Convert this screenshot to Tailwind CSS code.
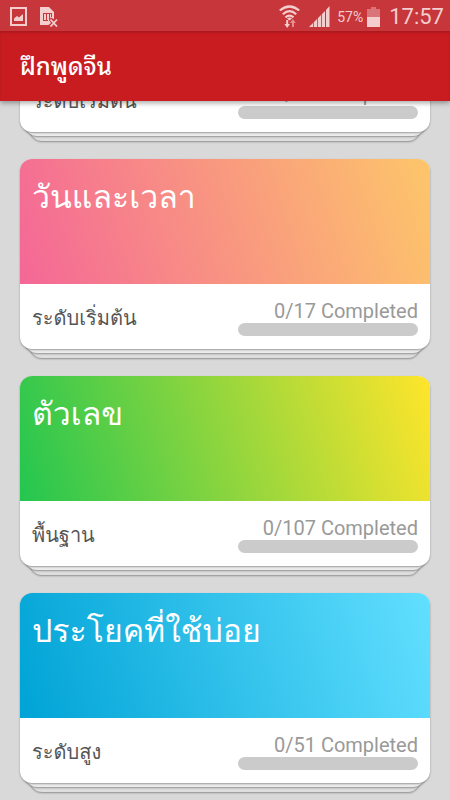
<!DOCTYPE html>
<html lang="th">
<head>
<meta charset="utf-8">
<meta name="viewport" content="width=device-width, initial-scale=1">
<title>ฝึกพูดจีน</title>
<script src="https://cdn.jsdelivr.net/npm/@tailwindcss/browser@4"></script>
</head>
<body class="flex h-screen flex-col overflow-hidden bg-[#d9d9d9] font-[Roboto,Loma,'Noto_Sans_Thai_Looped','Noto_Sans',sans-serif]">

<header class="relative z-10 shrink-0 bg-[#c81c21] shadow-[0_2px_5px_rgba(0,0,0,0.35)]">
  <!-- Status bar -->
  <div class="flex h-[31px] items-center justify-between bg-[#c6363b] pt-[2px] pr-[6px] pl-[10px] text-[#f4cdce]">
    <div class="flex items-center gap-[13px]">
      <svg class="h-[19px] w-[17px]" viewBox="0 0 17 19" fill="currentColor" aria-hidden="true">
        <path fill-rule="evenodd" d="M0 0H17V19H0ZM2 2V17H15V2Z"/>
        <path d="M4 14V11.500L7 9L9 10.500L13 7V14Z"/>
      </svg>
      <svg class="h-[20px] w-[18px]" viewBox="0 0 18 20" fill="currentColor" aria-hidden="true">
        <path d="M0 0H9L14 5V11.500L13.500 12L11 10.500L8.800 12.800L11 16L8.500 18H0Z"/>
        <path d="M3 6.500H12M3.500 6V14M6.500 6V14M9.500 6V12M11.500 6V10M3 13.500H8" fill="none" stroke="#c6363b" stroke-width="1"/>
        <path d="M10.500 12.500L17 19.500M17 12.500L10.500 19.500" fill="none" stroke="currentColor" stroke-width="1.800"/>
      </svg>
    </div>
    <div class="flex items-center">
      <svg class="mr-[9px] h-[24px] w-[21px]" viewBox="0 0 21 24" fill="none" stroke="currentColor" aria-hidden="true">
        <path d="M.8 5.500Q10.500-2.500 20.200 5.500M3.800 9.200Q10.500 3.200 17.200 9.200M6.500 12.400Q10.500 8.800 14.500 12.400" stroke-width="2.200"/>
        <path d="M8 13.500Q10.500 11.500 13 13.500L10.500 15.500Z" fill="currentColor" stroke="none"/>
        <path d="M7.200 15H9.200V19H11L8.200 23L5.400 19H7.200Z" fill="currentColor" stroke="none"/>
        <path d="M13 22V18H11L13.900 14L16.800 18H14.900V22Z" fill="#e58f92" stroke="none"/>
      </svg>
      <svg class="mr-[7px] h-[21px] w-[21px]" viewBox="0 0 21 21" fill="currentColor" aria-hidden="true">
        <path d="M0 21L4 17V21ZM4.800 21V16.200L8 13V21ZM8.800 21V12.200L12 9V21ZM12.800 21V8.200L16 5V21ZM17 21V4L20.500 0V21Z"/>
      </svg>
      <span class="mr-[4px] text-[14px] leading-5">57%</span>
      <svg class="mr-[9px] h-[20px] w-[13px]" viewBox="0 0 13 20" aria-hidden="true">
        <path d="M4 0H9V2H13V10H0V2H4Z" fill="#d97478"/>
        <path d="M0 10H13V20H0Z" fill="#f4cdce"/>
      </svg>
      <span class="text-[22px] leading-6">17:57</span>
    </div>
  </div>
  <!-- App bar -->
  <div class="flex h-[70px] items-center px-5 pb-1 shadow-[inset_0_2px_2px_rgba(0,0,0,0.12)]">
    <h1 class="font-['Noto_Sans_Thai_Looped',Loma,sans-serif] text-[24px] leading-9 font-medium text-white">ฝึกพูดจีน</h1>
  </div>
</header>

<!-- Deck list, scrolled to its end -->
<main class="flex min-h-0 flex-1 flex-col-reverse overflow-y-auto px-5 pb-[17px] [scrollbar-width:none]">
  <div class="flex shrink-0 flex-col gap-[27px]">

    <article class="relative isolate">
      <div class="absolute inset-x-[10px] -bottom-[9px] -z-10 h-8 rounded-xl bg-[#dedede] shadow-[0_1px_2px_rgba(0,0,0,0.35)]"></div>
      <div class="absolute inset-x-[5px] -bottom-[4px] -z-10 h-8 rounded-xl bg-[#ececec] shadow-[0_1px_2px_rgba(0,0,0,0.35)]"></div>
      <div class="overflow-hidden rounded-xl bg-white shadow-[0_1px_2px_rgba(0,0,0,0.35)]">
        <div class="h-[125px] bg-linear-[73deg,#f46797,#fdc66a]"></div>
        <div class="flex h-[65px] items-center justify-between px-3">
          <p class="pt-[2px] text-[20px] leading-8 text-[#555]">ระดับเริ่มต้น</p>
          <div class="flex w-[180px] flex-col pt-[2px] text-right">
            <span class="text-[20px] leading-6 text-[#999]">0/17 Completed</span>
            <div class="h-[13px] rounded-full bg-[#cbcbcb]"></div>
          </div>
        </div>
      </div>
    </article>

    <article class="relative isolate">
      <div class="absolute inset-x-[10px] -bottom-[9px] -z-10 h-8 rounded-xl bg-[#dedede] shadow-[0_1px_2px_rgba(0,0,0,0.35)]"></div>
      <div class="absolute inset-x-[5px] -bottom-[4px] -z-10 h-8 rounded-xl bg-[#ececec] shadow-[0_1px_2px_rgba(0,0,0,0.35)]"></div>
      <div class="overflow-hidden rounded-xl bg-white shadow-[0_1px_2px_rgba(0,0,0,0.35)]">
        <div class="h-[125px] bg-linear-[73deg,#f46797,#fdc66a] px-3 pt-[14px]">
          <h2 class="text-[32px] leading-[48px] text-white">วันและเวลา</h2>
        </div>
        <div class="flex h-[65px] items-center justify-between px-3">
          <p class="pt-[2px] text-[20px] leading-8 text-[#555]">ระดับเริ่มต้น</p>
          <div class="flex w-[180px] flex-col pt-[2px] text-right">
            <span class="text-[20px] leading-6 text-[#999]">0/17 Completed</span>
            <div class="h-[13px] rounded-full bg-[#cbcbcb]"></div>
          </div>
        </div>
      </div>
    </article>

    <article class="relative isolate">
      <div class="absolute inset-x-[10px] -bottom-[9px] -z-10 h-8 rounded-xl bg-[#dedede] shadow-[0_1px_2px_rgba(0,0,0,0.35)]"></div>
      <div class="absolute inset-x-[5px] -bottom-[4px] -z-10 h-8 rounded-xl bg-[#ececec] shadow-[0_1px_2px_rgba(0,0,0,0.35)]"></div>
      <div class="overflow-hidden rounded-xl bg-white shadow-[0_1px_2px_rgba(0,0,0,0.35)]">
        <div class="h-[125px] bg-linear-[73deg,#23c650,#ffe52b] px-3 pt-[14px]">
          <h2 class="text-[32px] leading-[48px] text-white">ตัวเลข</h2>
        </div>
        <div class="flex h-[65px] items-center justify-between px-3">
          <p class="pt-[2px] text-[20px] leading-8 text-[#555]">พื้นฐาน</p>
          <div class="flex w-[180px] flex-col pt-[2px] text-right">
            <span class="text-[20px] leading-6 text-[#999]">0/107 Completed</span>
            <div class="h-[13px] rounded-full bg-[#cbcbcb]"></div>
          </div>
        </div>
      </div>
    </article>

    <article class="relative isolate">
      <div class="absolute inset-x-[10px] -bottom-[9px] -z-10 h-8 rounded-xl bg-[#dedede] shadow-[0_1px_2px_rgba(0,0,0,0.35)]"></div>
      <div class="absolute inset-x-[5px] -bottom-[4px] -z-10 h-8 rounded-xl bg-[#ececec] shadow-[0_1px_2px_rgba(0,0,0,0.35)]"></div>
      <div class="overflow-hidden rounded-xl bg-white shadow-[0_1px_2px_rgba(0,0,0,0.35)]">
        <div class="h-[125px] bg-linear-[73deg,#00a3d6,#62dfff] px-3 pt-[14px]">
          <h2 class="text-[32px] leading-[48px] text-white">ประโยคที่ใช้บ่อย</h2>
        </div>
        <div class="flex h-[65px] items-center justify-between px-3">
          <p class="pt-[2px] text-[20px] leading-8 text-[#555]">ระดับสูง</p>
          <div class="flex w-[180px] flex-col pt-[2px] text-right">
            <span class="text-[20px] leading-6 text-[#999]">0/51 Completed</span>
            <div class="h-[13px] rounded-full bg-[#cbcbcb]"></div>
          </div>
        </div>
      </div>
    </article>

  </div>
</main>
</body>
</html>
